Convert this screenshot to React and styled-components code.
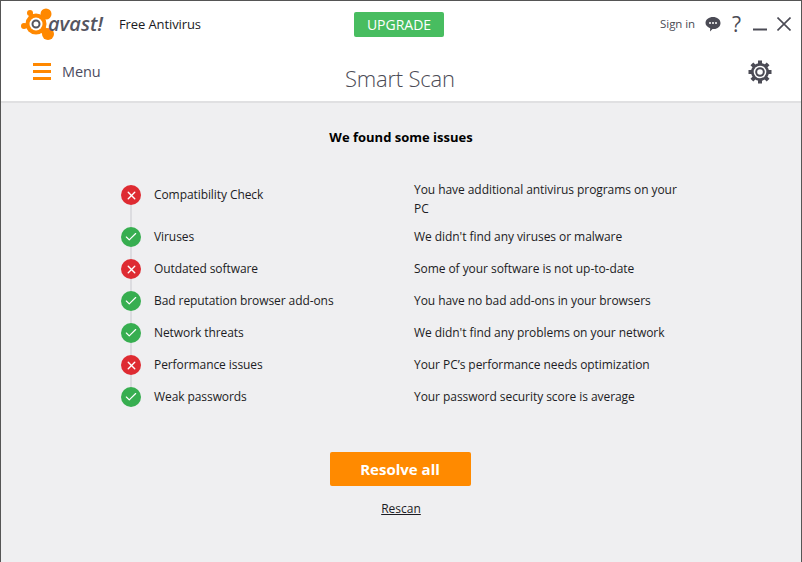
import styled, { createGlobalStyle } from "styled-components";
import { Check, X } from "lucide-react";

const GlobalStyle = createGlobalStyle`
  html, body {
    margin: 0;
    padding: 0;
    background: #efeff1;
  }
  * {
    box-sizing: border-box;
  }
`;

const Window = styled.div`
  width: 802px;
  height: 562px;
  display: flex;
  flex-direction: column;
  border: 1px solid #555;
  border-bottom: 0;
  background: #efeff1;
  font-family: "Open Sans", "Noto Sans", sans-serif;
  font-size: 12px;
  letter-spacing: -0.08px;
  color: #1c1c24;
  overflow: hidden;
`;

const Header = styled.header`
  height: 102px;
  flex: none;
  display: flex;
  flex-direction: column;
  background: #fff;
  border-bottom: 2px solid #e0e0e2;
`;

const TopBar = styled.div`
  height: 45px;
  flex: none;
  display: grid;
  grid-template-columns: 333px 90px 1fr;
  align-items: center;
  padding: 0 10px 0 20px;
`;

const Brand = styled.div`
  display: flex;
  align-items: center;
`;

const LogoMark = styled.svg`
  display: block;
  flex: none;
  margin-top: -1px;
`;

const LogoText = styled.span`
  width: 56px;
  margin-left: -7px;
  font-size: 20px;
  font-weight: 600;
  font-style: italic;
  letter-spacing: 0;
  color: #55555f;
`;

const Product = styled.span`
  margin-left: 15px;
  font-size: 13px;
  letter-spacing: -0.1px;
  color: #1a1a22;
`;

const Upgrade = styled.button`
  width: 90px;
  height: 25px;
  margin-top: 1px;
  border: 0;
  border-radius: 2px;
  padding: 0;
  background: #48bd60;
  color: #fff;
  font-family: inherit;
  font-size: 14px;
`;

const TopActions = styled.div`
  display: flex;
  align-items: center;
  justify-content: flex-end;
`;

const SignIn = styled.span`
  font-size: 11.5px;
  color: #4b4b55;
  margin-right: 10px;
`;

const ActionIcon = styled.svg`
  display: block;
  flex: none;
  margin-left: ${(p) => p.$gap || 0}px;
`;

const Help = styled.span`
  margin: 0 12px 0 11px;
  font-size: 21px;
  line-height: 20px;
  color: #4b4b55;
`;

const SubBar = styled.div`
  flex: 1;
  display: grid;
  grid-template-columns: 312px auto 1fr;
  align-items: start;
  padding: 0 29px 0 32px;
`;

const MenuButton = styled.div`
  display: flex;
  align-items: center;
  gap: 11px;
  padding-top: 16px;
  font-size: 14.5px;
  color: #4b4b60;
`;

const Burger = styled.span`
  display: flex;
  flex-direction: column;
  gap: 4px;
  width: 18px;

  i {
    display: block;
    height: 3px;
    background: #ff8800;
  }
`;

const Title = styled.h1`
  margin: 17px 0 0;
  font-size: 22px;
  font-weight: 300;
  line-height: 30px;
  letter-spacing: -0.2px;
  color: #4b4b55;
`;

const Gear = styled.svg`
  justify-self: end;
  display: block;
  margin-top: 14px;
`;

const Content = styled.main`
  flex: 1;
  display: flex;
  flex-direction: column;
  align-items: center;
`;

const Heading = styled.h2`
  margin: 24px 0 0;
  font-size: 13px;
  font-weight: 700;
  line-height: 20px;
  letter-spacing: 0;
  color: #000;
`;

const Checks = styled.ul`
  list-style: none;
  width: 100%;
  margin: 38px 0 0;
  padding: 0 0 0 120px;
`;

const CheckRow = styled.li`
  position: relative;
  display: grid;
  grid-template-columns: 20px 273px 270px;
  min-height: ${(p) => (p.$tall ? 42 : 32)}px;
  line-height: 19px;

  &:not(:last-child)::before {
    content: "";
    position: absolute;
    left: 9px;
    top: 20px;
    bottom: 0;
    width: 2px;
    background: #dcdce0;
  }
`;

const StatusDot = styled.span`
  width: 20px;
  height: 20px;
  border-radius: 50%;
  display: flex;
  align-items: center;
  justify-content: center;
  background: ${(p) => (p.$ok ? "#37ae50" : "#de2b32")};
  color: #fff;
`;

const CheckName = styled.span`
  padding: 0 0 0 13px;
`;

const CheckResult = styled.span`
  margin-top: ${(p) => (p.$tall ? -5 : 0)}px;
  letter-spacing: -0.06px;
`;

const Resolve = styled.button`
  width: 141px;
  height: 34px;
  margin: 33px 2px 0 0;
  border: 0;
  border-radius: 2px;
  padding: 0;
  background: #ff8a00;
  color: #fff;
  font-family: inherit;
  font-size: 15px;
  font-weight: 700;
`;

const Rescan = styled.a`
  margin-top: 14px;
  font-size: 12px;
  line-height: 18px;
  letter-spacing: 0;
  color: #1c1c24;
  text-decoration: underline;
`;

const checks = [
  { ok: false, name: "Compatibility Check", result: "You have additional antivirus programs on your PC", tall: true },
  { ok: true, name: "Viruses", result: "We didn't find any viruses or malware" },
  { ok: false, name: "Outdated software", result: "Some of your software is not up-to-date" },
  { ok: true, name: "Bad reputation browser add-ons", result: "You have no bad add-ons in your browsers" },
  { ok: true, name: "Network threats", result: "We didn't find any problems on your network" },
  { ok: false, name: "Performance issues", result: "Your PC’s performance needs optimization" },
  { ok: true, name: "Weak passwords", result: "Your password security score is average" },
];

function Splat() {
  return (
    <LogoMark width="34" height="34" viewBox="0 0 34 34">
      <g stroke="#ff8800" strokeLinecap="round" fill="none">
        <path d="M15 18 L25 8" strokeWidth="6" />
        <path d="M15 18 L9 7" strokeWidth="4" />
        <path d="M15 18 L3 20" strokeWidth="4.500" />
        <path d="M15 18 L27 28" strokeWidth="7" />
      </g>
      <g fill="#ff8800">
        <circle cx="25" cy="8" r="5.500" />
        <circle cx="9" cy="7" r="3" />
        <circle cx="3" cy="20" r="3" />
        <circle cx="27" cy="28" r="6" />
        <circle cx="15" cy="18" r="10.500" />
      </g>
      <circle cx="15" cy="18" r="6.500" fill="#fff" />
      <circle cx="15" cy="18" r="3.500" fill="none" stroke="#55555f" strokeWidth="2" />
    </LogoMark>
  );
}

export default function App() {
  return (
    <Window>
      <GlobalStyle />
      <Header>
        <TopBar>
          <Brand>
            <Splat />
            <LogoText>avast!</LogoText>
            <Product>Free Antivirus</Product>
          </Brand>
          <Upgrade>UPGRADE</Upgrade>
          <TopActions>
            <SignIn>Sign in</SignIn>
            <ActionIcon width="16" height="16" viewBox="0 0 16 16">
              <path d="M8 1c4 0 7.500 2.500 7.500 6s-3 6-6.500 6c-.6 0-1 0-1.500-.1L5 15.500l.2-3.300C2.500 11.200.5 9.300.5 7 .5 3.500 4 1 8 1z" fill="#4b4b55" />
              <circle cx="5" cy="7" r="1" fill="#fff" />
              <circle cx="8" cy="7" r="1" fill="#fff" />
              <circle cx="11" cy="7" r="1" fill="#fff" />
            </ActionIcon>
            <Help>?</Help>
            <ActionIcon width="14" height="14" viewBox="0 0 14 14">
              <path d="M0 12.500h14" stroke="#4b4b55" strokeWidth="2" />
            </ActionIcon>
            <ActionIcon $gap={10} width="14" height="14" viewBox="0 0 14 14">
              <path d="M.5.500l13 13M13.500.500l-13 13" stroke="#4b4b55" strokeWidth="1.600" />
            </ActionIcon>
          </TopActions>
        </TopBar>
        <SubBar>
          <MenuButton>
            <Burger>
              <i />
              <i />
              <i />
            </Burger>
            Menu
          </MenuButton>
          <Title>Smart Scan</Title>
          <Gear width="24" height="24" viewBox="0 0 24 24">
            <g stroke="#4b4b55" strokeWidth="4" strokeLinecap="butt">
              <path d="M12 .500v23M.500 12h23M3.900 3.900l16.200 16.200M20.100 3.900L3.900 20.100" />
            </g>
            <circle cx="12" cy="12" r="9" fill="#4b4b55" />
            <circle cx="12" cy="12" r="6.300" fill="#fff" />
            <circle cx="12" cy="12" r="4.800" fill="#4b4b55" />
            <circle cx="12" cy="12" r="2.800" fill="#fff" />
          </Gear>
        </SubBar>
      </Header>
      <Content>
        <Heading>We found some issues</Heading>
        <Checks>
          {checks.map((c) => (
            <CheckRow key={c.name} $tall={c.tall}>
              <StatusDot $ok={c.ok}>
                {c.ok ? <Check size={14} strokeWidth={2} /> : <X size={13} strokeWidth={2.6} />}
              </StatusDot>
              <CheckName>{c.name}</CheckName>
              <CheckResult $tall={c.tall}>{c.result}</CheckResult>
            </CheckRow>
          ))}
        </Checks>
        <Resolve>Resolve all</Resolve>
        <Rescan href="#">Rescan</Rescan>
      </Content>
    </Window>
  );
}
